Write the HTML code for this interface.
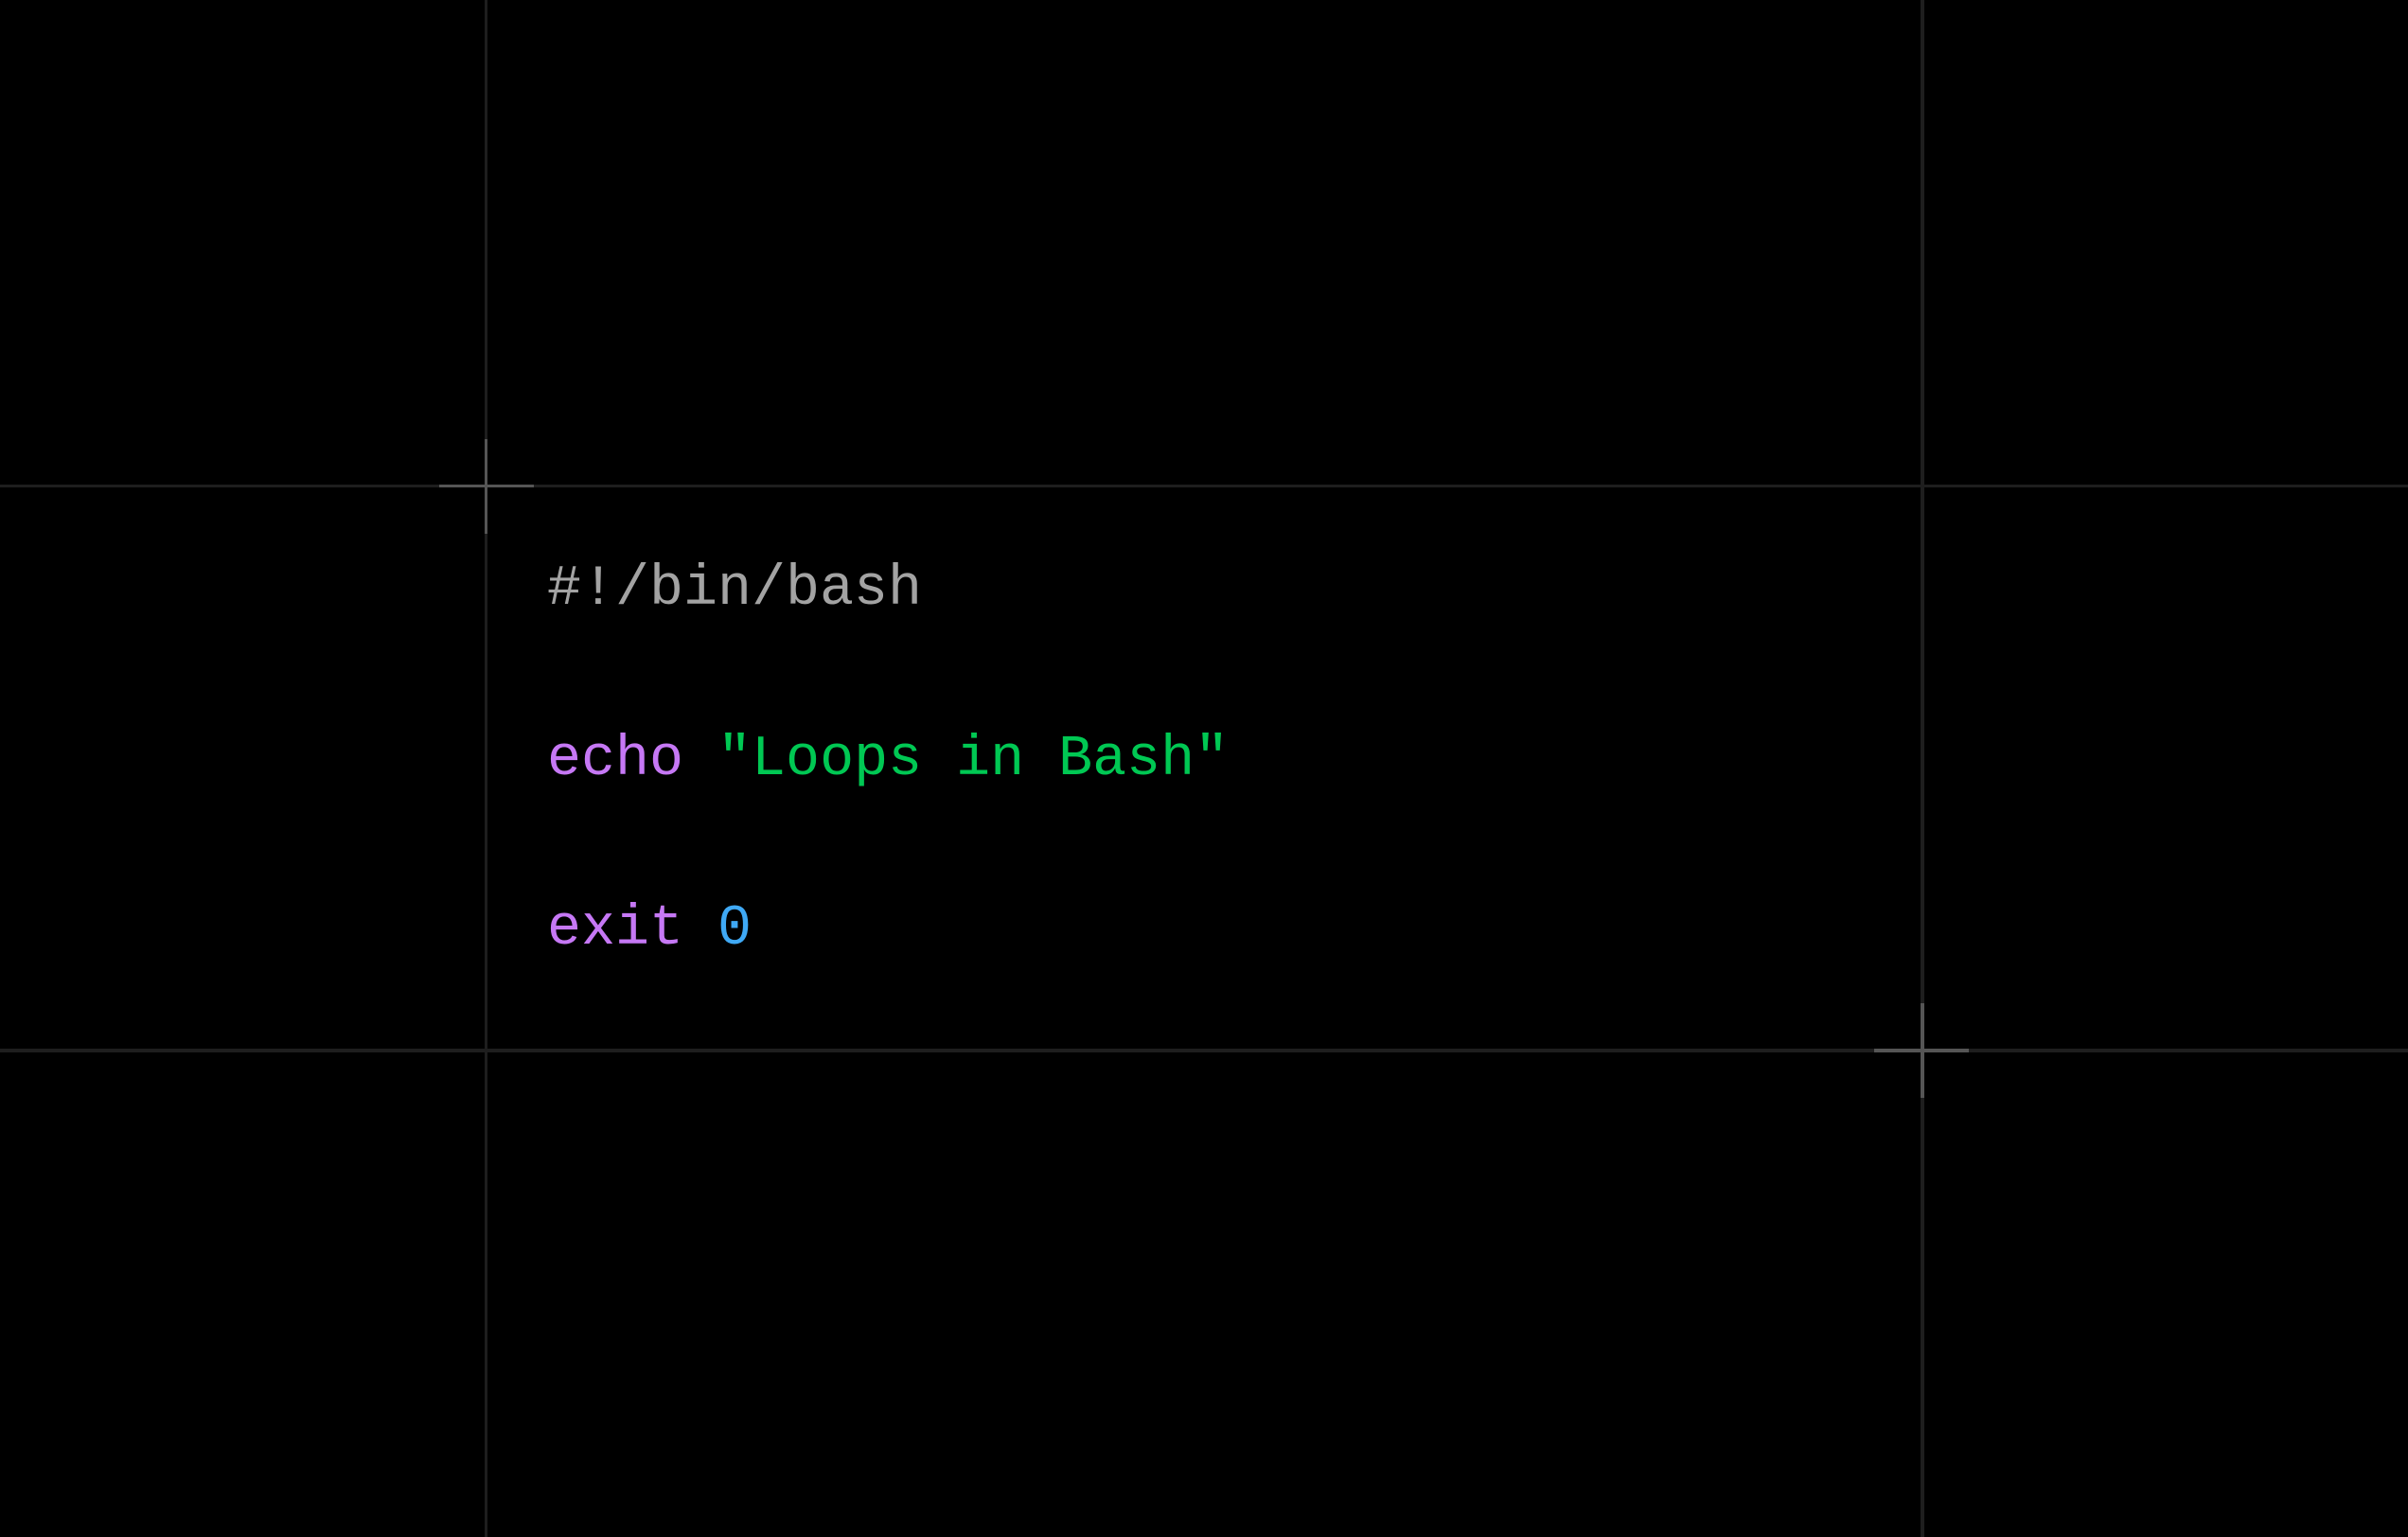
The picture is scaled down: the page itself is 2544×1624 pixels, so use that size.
<!DOCTYPE html>
<html><head><meta charset="utf-8"><style>
html,body{margin:0;padding:0;background:#000;width:2544px;height:1624px;overflow:hidden;position:relative}
.l{position:absolute;background:#1e1e1e}
.c{position:absolute;background:#555}
.t{position:absolute;left:578px;font-family:"Liberation Mono",monospace;font-size:60px;line-height:60px;white-space:pre}
</style></head><body>
<div class="l" style="left:512px;top:0;width:3px;height:1624px"></div>
<div class="l" style="left:2029px;top:0;width:4px;height:1624px"></div>
<div class="l" style="left:0;top:512px;width:2544px;height:3px"></div>
<div class="l" style="left:0;top:1108px;width:2544px;height:4px"></div>
<div class="c" style="left:512px;top:464px;width:3px;height:100px"></div>
<div class="c" style="left:464px;top:512px;width:100px;height:3px"></div>
<div class="c" style="left:2029px;top:1060px;width:4px;height:100px"></div>
<div class="c" style="left:1980px;top:1108px;width:100px;height:4px"></div>
<div class="t" style="top:593px;color:#a3a3a3">#!/bin/bash</div>
<div class="t" style="top:773px"><span style="color:#c678f5">echo</span> <span style="color:#00c853">"Loops in Bash"</span></div>
<div class="t" style="top:952px"><span style="color:#c678f5">exit</span> <span style="color:#3fa9f5">0</span></div>
</body></html>
